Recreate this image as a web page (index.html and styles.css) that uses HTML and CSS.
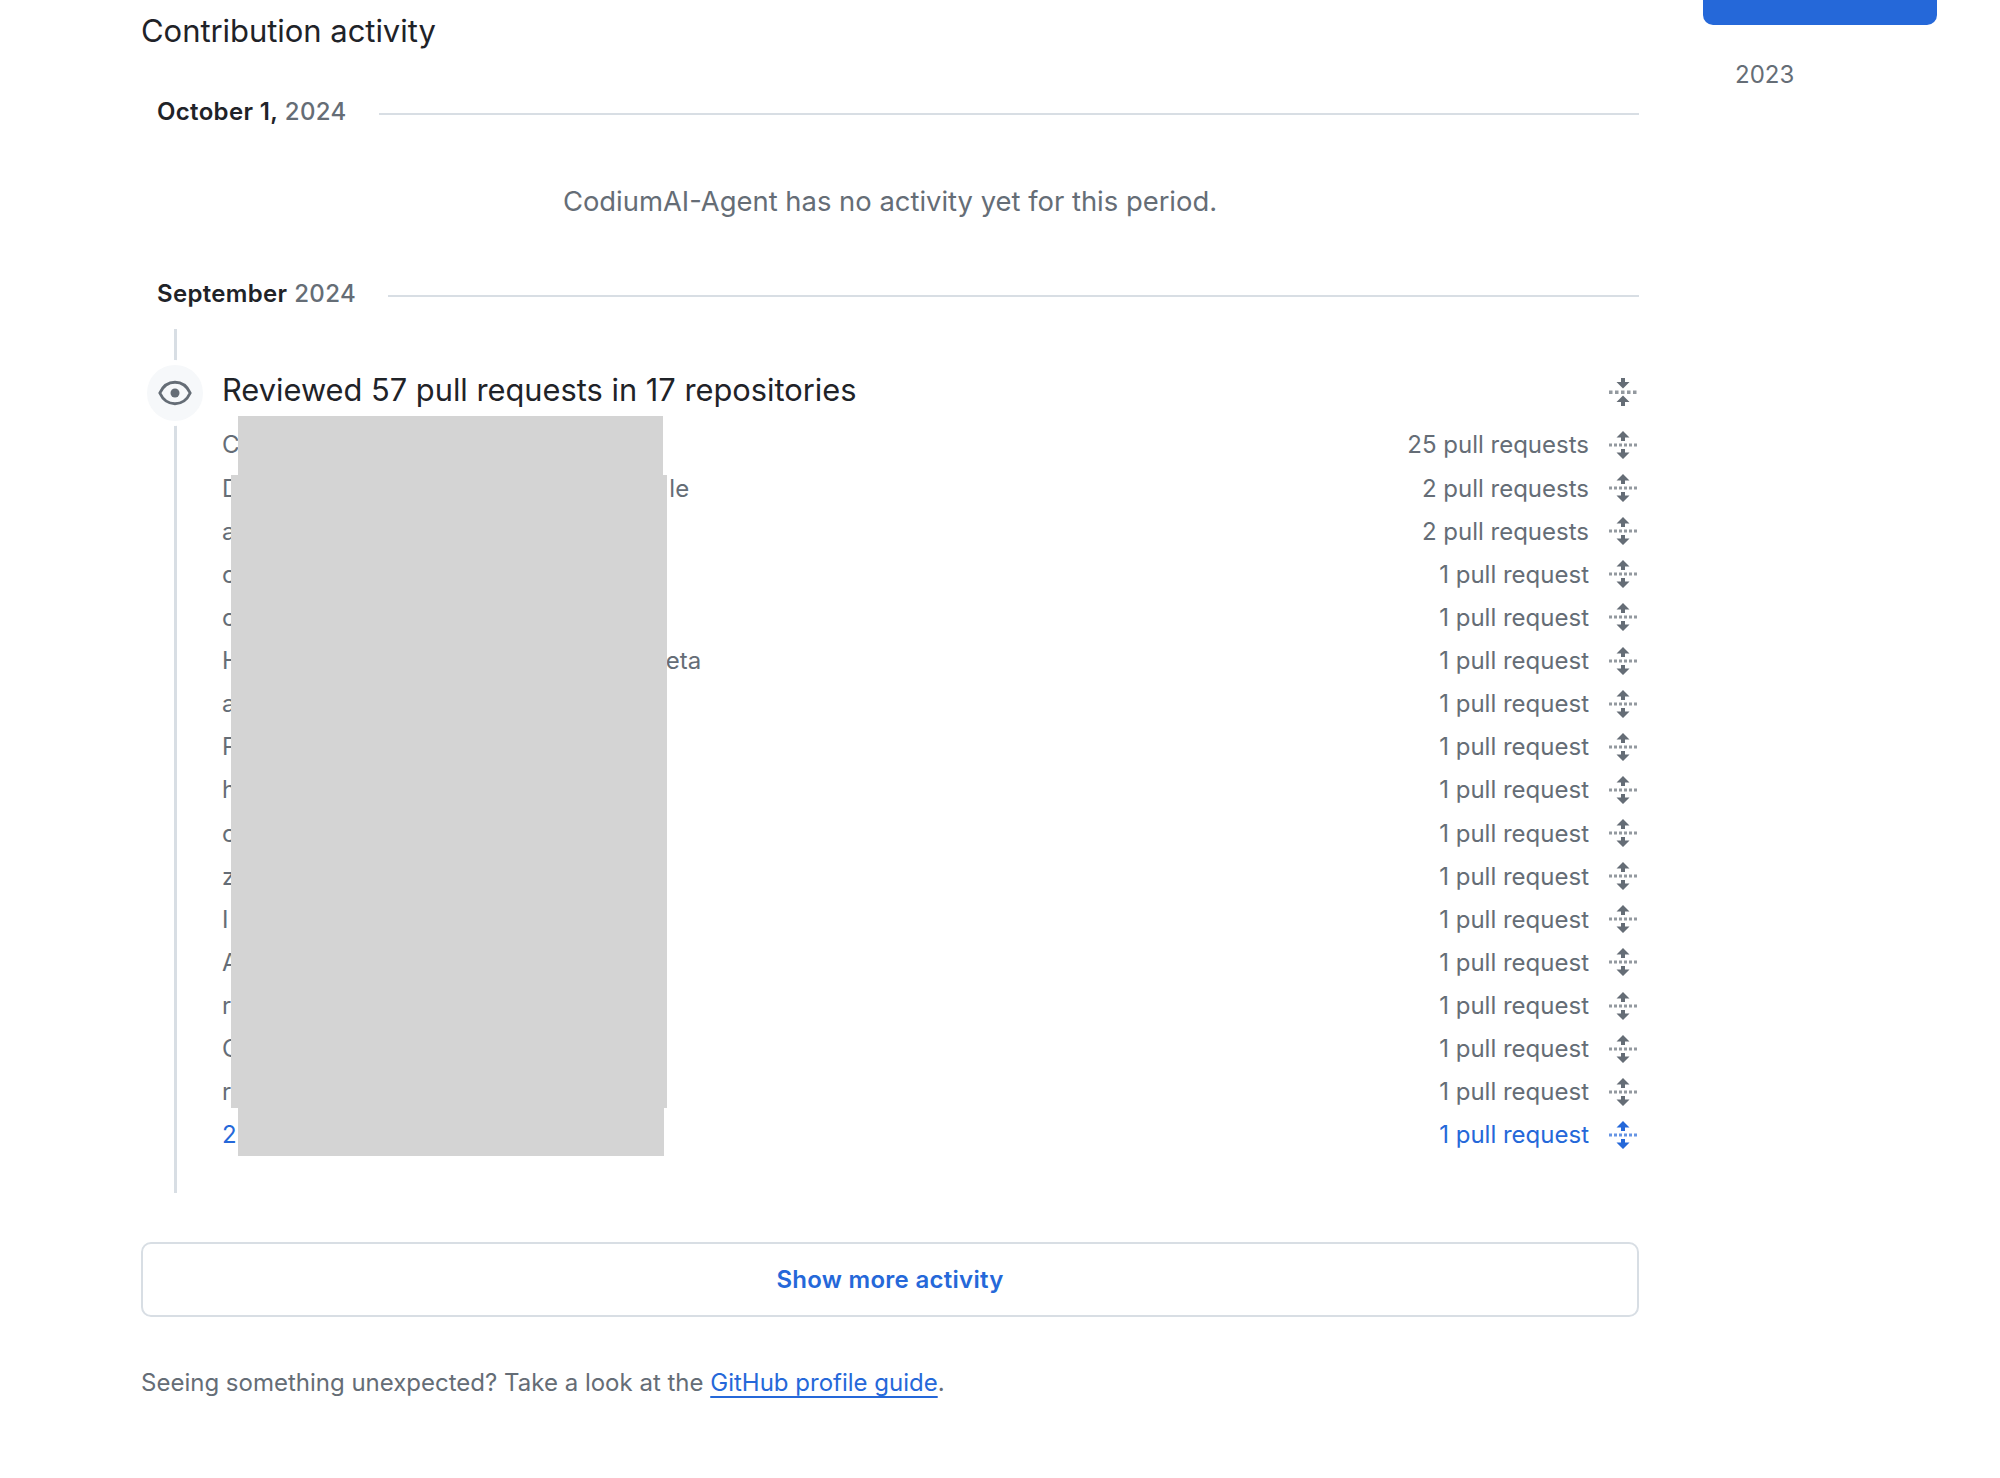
FILE: index.html
```html
<!DOCTYPE html>
<html lang="en">
<head>
<meta charset="utf-8">
<title>Contribution activity</title>
<link rel="stylesheet" href="styles.css">
</head>
<body>
<svg class="defs" width="0" height="0" aria-hidden="true">
  <symbol id="unfold" viewBox="0 0 28 28">
    <path d="M14 0l6.500 6.500h-4.500V10h-4V6.500h-4.500z"/>
    <path d="M14 28l6.500-6.500h-4.500V18h-4v3.500h-4.500z"/>
    <path class="dots" d="M0 12.500h3v3H0zM5 12.500h3v3H5zM10 12.500h3v3h-3zM15 12.500h3v3h-3zM20 12.500h3v3h-3zM25 12.500h3v3h-3z"/>
  </symbol>
  <symbol id="fold" viewBox="0 0 28 28">
    <path d="M14 10.500l-6.500-6.500h4.500V0h4v4h4.500z"/>
    <path d="M14 17.500l6.500 6.500h-4.500v4h-4v-4h-4.500z"/>
    <path class="dots" d="M0 12.500h3.500v3.500H0zM6 12.500h3.500v3.500H6zM12 12.500h3.500v3.500H12zM18 12.500h3.500v3.500H18zM24 12.500h3.500v3.500H24z"/>
  </symbol>
</svg>
<div class="page">
  <main class="main">
    <h2 class="title">Contribution activity</h2>

    <div class="date-row first">
      <h3 class="date"><b>October 1,</b> 2024</h3>
      <span class="rule"></span>
    </div>
    <p class="empty">CodiumAI-Agent has no activity yet for this period.</p>

    <div class="date-row">
      <h3 class="date"><b>September</b> 2024</h3>
      <span class="rule"></span>
    </div>

    <section class="timeline">
      <span class="badge">
        <svg class="eye" viewBox="0 0 32 32"><path d="M2.500 16C5.500 9.500 10.500 6.500 16 6.500S26.500 9.500 29.500 16C26.500 22.500 21.500 25.500 16 25.500S5.500 22.500 2.500 16z"/><circle cx="16" cy="16" r="4"/></svg>
      </span>
      <div class="headline">
        <span>Reviewed 57 pull requests in 17 repositories</span>
        <svg class="toggle"><use href="#fold"/></svg>
      </div>
      <ul class="repos">
        <li class="repo"><span class="name">C</span><span class="count">25 pull requests</span><svg class="toggle"><use href="#unfold"/></svg></li>
        <li class="repo"><span class="name">D<span class="tail tail-le">le</span></span><span class="count">2 pull requests</span><svg class="toggle"><use href="#unfold"/></svg></li>
        <li class="repo"><span class="name">a</span><span class="count">2 pull requests</span><svg class="toggle"><use href="#unfold"/></svg></li>
        <li class="repo"><span class="name">c</span><span class="count">1 pull request</span><svg class="toggle"><use href="#unfold"/></svg></li>
        <li class="repo"><span class="name">c</span><span class="count">1 pull request</span><svg class="toggle"><use href="#unfold"/></svg></li>
        <li class="repo"><span class="name">H<span class="tail tail-eta">eta</span></span><span class="count">1 pull request</span><svg class="toggle"><use href="#unfold"/></svg></li>
        <li class="repo"><span class="name">a</span><span class="count">1 pull request</span><svg class="toggle"><use href="#unfold"/></svg></li>
        <li class="repo"><span class="name">P</span><span class="count">1 pull request</span><svg class="toggle"><use href="#unfold"/></svg></li>
        <li class="repo"><span class="name">h</span><span class="count">1 pull request</span><svg class="toggle"><use href="#unfold"/></svg></li>
        <li class="repo"><span class="name">c</span><span class="count">1 pull request</span><svg class="toggle"><use href="#unfold"/></svg></li>
        <li class="repo"><span class="name">z</span><span class="count">1 pull request</span><svg class="toggle"><use href="#unfold"/></svg></li>
        <li class="repo"><span class="name">I</span><span class="count">1 pull request</span><svg class="toggle"><use href="#unfold"/></svg></li>
        <li class="repo"><span class="name">A</span><span class="count">1 pull request</span><svg class="toggle"><use href="#unfold"/></svg></li>
        <li class="repo"><span class="name">r</span><span class="count">1 pull request</span><svg class="toggle"><use href="#unfold"/></svg></li>
        <li class="repo"><span class="name">C</span><span class="count">1 pull request</span><svg class="toggle"><use href="#unfold"/></svg></li>
        <li class="repo"><span class="name">r</span><span class="count">1 pull request</span><svg class="toggle"><use href="#unfold"/></svg></li>
        <li class="repo active"><span class="name">2</span><span class="count">1 pull request</span><svg class="toggle"><use href="#unfold"/></svg></li>
      </ul>
      <div class="redact redact-a"></div>
      <div class="redact redact-b"></div>
      <div class="redact redact-c"></div>
    </section>

    <button class="more" type="button">Show more activity</button>
    <p class="foot">Seeing something unexpected? Take a look at the <a href="#">GitHub profile guide</a>.</p>
  </main>

  <aside class="side">
    <div class="year-current"></div>
    <div class="year">2023</div>
  </aside>
</div>
</body>
</html>
```
FILE: styles.css
```css
* { box-sizing: border-box; }
html, body { margin: 0; padding: 0; background: #fff; }
body {
  font-family: Inter, "Liberation Sans", sans-serif;
  color: #1f2328;
  height: 1478px;
  overflow: hidden;
}
.defs { position: absolute; }
.page {
  display: grid;
  grid-template-columns: 1498px 234px;
  column-gap: 64px;
  padding-left: 141px;
}
.main { min-width: 0; }
.title {
  margin: 11px 0 0;
  font-size: 31px;
  line-height: 40px;
  font-weight: 400;
  letter-spacing: -0.05px;
}
.date-row {
  display: flex;
  align-items: center;
  gap: 32px;
  height: 40px;
  padding-left: 16px;
}
.date-row.first { margin-top: 41px; }
.date {
  margin: 0;
  font-size: 24px;
  line-height: 40px;
  font-weight: 500;
  letter-spacing: 0.33px;
  color: #656d76;
  white-space: nowrap;
}
.date b { font-weight: 600; color: #1f2328; }
.rule { flex: 1; height: 2px; margin-top: 3px; background: #d8dee4; }
.empty {
  margin: 51px 0 55px;
  height: 36px;
  font-size: 27.4px;
  line-height: 36px;
  text-align: center;
  color: #656d76;
}
.timeline {
  position: relative;
  margin: 15px 0 0 33px;
  padding: 41px 2px 36.4px 45px;
  border-left: 3px solid #d8dee4;
  height: 864px;
}
.badge {
  position: absolute;
  left: -35px;
  top: 31px;
  width: 66px;
  height: 66px;
  display: flex;
  align-items: center;
  justify-content: center;
  background: #f6f8fa;
  border: 5px solid #fff;
  border-radius: 50%;
}
.eye { width: 36px; height: 36px; }
.eye path { fill: none; stroke: #656d76; stroke-width: 2.6; stroke-linejoin: round; }
.eye circle { fill: #656d76; }
.headline {
  display: flex;
  align-items: center;
  justify-content: space-between;
  height: 40px;
  font-size: 30.8px;
  line-height: 40px;
}
.toggle { width: 28px; height: 28px; flex: none; fill: #656d76; }
.headline .toggle { margin-top: 4px; }
.dots { opacity: 0.7; }
.repos { list-style: none; margin: 13.4px 0 0; padding: 0; }
.repo {
  display: flex;
  align-items: center;
  height: 43.125px;
  font-size: 24px;
  color: #656d76;
}
.repo.active { color: #2568d9; }
.repo.active .toggle { fill: #2568d9; }
.name { flex: 1; white-space: nowrap; }
.tail { display: inline-block; }
.tail-le { margin-left: 430px; }
.tail-eta { margin-left: 426px; }
.count { margin-right: 20px; white-space: nowrap; }
.redact { position: absolute; background: #d4d4d4; }
.redact-a { left: 61px; top: 87px; width: 425px; height: 59px; }
.redact-b { left: 54px; top: 146px; width: 436px; height: 633px; }
.redact-c { left: 61px; top: 779px; width: 426px; height: 48px; }
.more {
  display: block;
  width: 100%;
  height: 75px;
  margin: 49px 0 0;
  padding: 0;
  background: #fff;
  border: 2px solid #d8dee4;
  border-radius: 10px;
  font: 600 24px Inter, "Liberation Sans", sans-serif;
  letter-spacing: 0.28px;
  color: #2568d9;
}
.foot {
  margin: 48px 0 0;
  height: 36px;
  font-size: 24px;
  line-height: 36px;
  color: #656d76;
}
.foot a { color: #2568d9; text-decoration: underline; text-underline-offset: 5px; text-decoration-thickness: 2px; }
.year-current {
  height: 25px;
  background: #2568d9;
  border-radius: 0 0 10px 10px;
}
.year {
  margin-top: 32px;
  padding-left: 32px;
  height: 36px;
  font-size: 24px;
  line-height: 36px;
  color: #656d76;
}
```
